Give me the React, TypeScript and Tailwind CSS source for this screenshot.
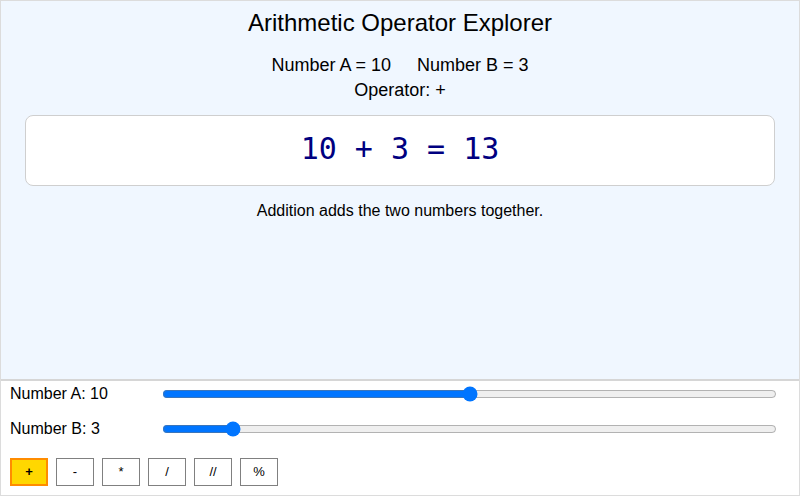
import { useState } from 'react';

const OPS = ['+', '-', '*', '/', '//', '%'];

const DESCRIPTIONS: Record<string, string> = {
  '+': 'Addition adds the two numbers together.',
  '-': 'Subtraction takes the second number away from the first.',
  '*': 'Multiplication repeats the first number B times.',
  '/': 'Division splits the first number into equal parts.',
  '//': 'Floor division divides and rounds down to a whole number.',
  '%': 'Modulo gives the remainder after division.',
};

function compute(a: number, b: number, op: string): string {
  switch (op) {
    case '+':
      return String(a + b);
    case '-':
      return String(a - b);
    case '*':
      return String(a * b);
    case '/':
      return String(Math.round((a / b) * 100) / 100);
    case '//':
      return String(Math.floor(a / b));
    default:
      return String(((a % b) + b) % b);
  }
}

export default function App() {
  const [a, setA] = useState(10);
  const [b, setB] = useState(3);
  const [op, setOp] = useState('+');

  return (
    <div className="flex h-[496px] w-[800px] flex-col border border-[#dcdcdc] font-['Liberation_Sans',Arial,sans-serif] text-black">
      <div className="flex flex-1 flex-col items-center bg-[#f0f7ff] px-[24px]">
        <h1 className="mt-[8px] text-[24px] leading-[28px]">Arithmetic Operator Explorer</h1>
        <div className="mt-[17px] flex gap-[26px] text-[18px] leading-[22px]">
          <span>Number A = {a}</span>
          <span>Number B = {b}</span>
        </div>
        <div className="mt-[3px] text-[18px] leading-[22px]">Operator: {op}</div>
        <div className="mt-[14px] flex h-[71px] w-full items-center justify-center rounded-[8px] border border-[#cfcfcf] bg-white pb-[5px]">
          <span className="font-['DejaVu_Sans_Mono',monospace] text-[30px] text-[#000080]">
            {a} {op} {b} = {compute(a, b, op)}
          </span>
        </div>
        <p className="mt-[15px] text-[16px] leading-[20px]">{DESCRIPTIONS[op]}</p>
      </div>

      <div className="flex h-[116px] flex-col border-t-2 border-[#d6d6d6] bg-white px-[9px]">
        <SliderRow label={`Number A: ${a}`} min={0} max={20} value={a} onChange={setA} className="mt-[2px]" />
        <SliderRow label={`Number B: ${b}`} min={1} max={20} value={b} onChange={setB} className="mt-[13px]" />
        <div className="mt-[18px] flex gap-[8px]">
          {OPS.map((o) => (
            <button
              key={o}
              onClick={() => setOp(o)}
              className={
                o === op
                  ? 'h-[28px] w-[38px] border-2 border-[#ff8c00] bg-[#ffd700] text-[13px] font-bold'
                  : 'h-[28px] w-[38px] border border-[#808080] bg-white text-[13px]'
              }
            >
              {o}
            </button>
          ))}
        </div>
      </div>
    </div>
  );
}

function SliderRow({
  label,
  min,
  max,
  value,
  onChange,
  className,
}: {
  label: string;
  min: number;
  max: number;
  value: number;
  onChange: (v: number) => void;
  className?: string;
}) {
  return (
    <div className={`flex h-[22px] items-center ${className ?? ''}`}>
      <label className="w-[152px] text-[16px]">{label}</label>
      <input
        type="range"
        min={min}
        max={max}
        value={value}
        onChange={(e) => onChange(Number(e.target.value))}
        className="mr-[13px] flex-1"
      />
    </div>
  );
}
